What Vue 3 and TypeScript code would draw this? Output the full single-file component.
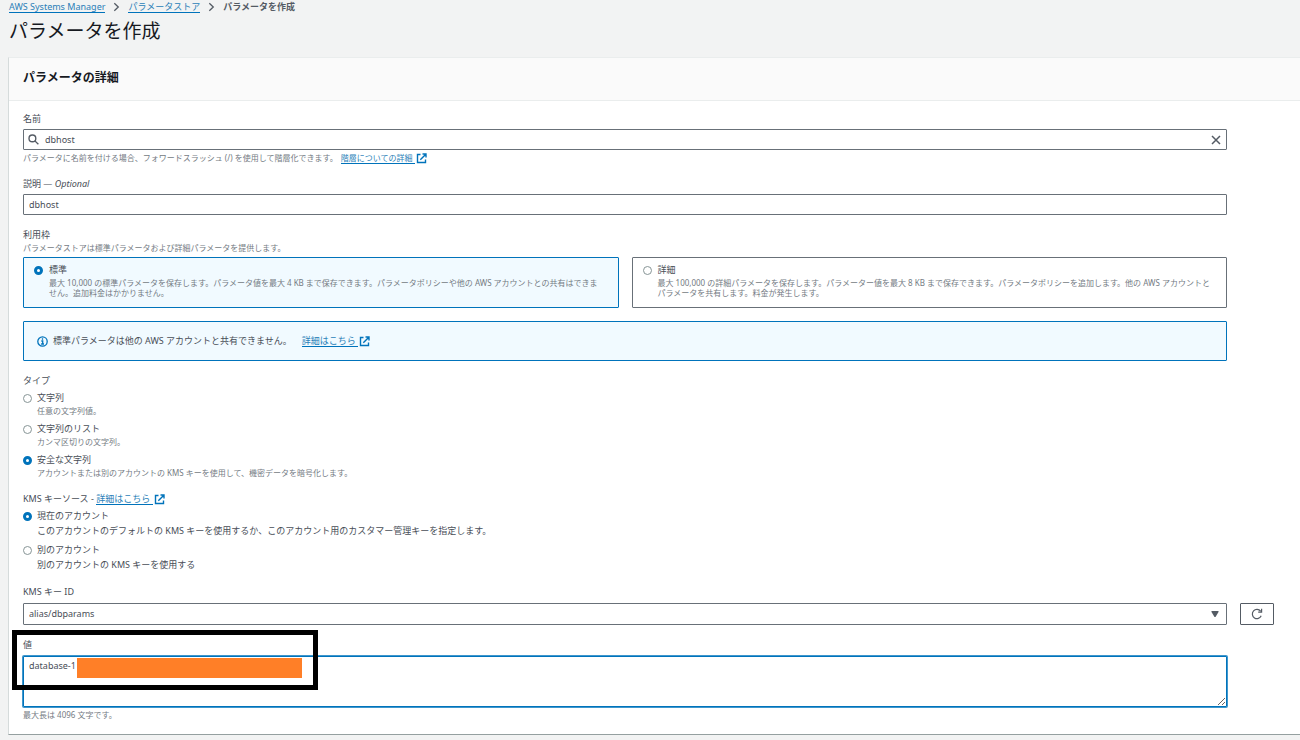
<script setup lang="ts">
import { ref } from 'vue'

interface Choice {
  id: string
  label: string
  text: string
}

const name = ref('dbhost')
const description = ref('dbhost')
const tier = ref('standard')
const type = ref('secure')
const source = ref('current')
const keyId = ref('alias/dbparams')
const value = ref('database-1')

const tiers: Choice[] = [
  {
    id: 'standard',
    label: '標準',
    text: '最大 10,000 の標準パラメータを保存します。パラメータ値を最大 4 KB まで保存できます。パラメータポリシーや他の AWS アカウントとの共有はできません。追加料金はかかりません。',
  },
  {
    id: 'advanced',
    label: '詳細',
    text: '最大 100,000 の詳細パラメータを保存します。パラメーター値を最大 8 KB まで保存できます。パラメータポリシーを追加します。他の AWS アカウントとパラメータを共有します。料金が発生します。',
  },
]

const types: Choice[] = [
  { id: 'string', label: '文字列', text: '任意の文字列値。' },
  { id: 'list', label: '文字列のリスト', text: 'カンマ区切りの文字列。' },
  {
    id: 'secure',
    label: '安全な文字列',
    text: 'アカウントまたは別のアカウントの KMS キーを使用して、機密データを暗号化します。',
  },
]

const sources: Choice[] = [
  {
    id: 'current',
    label: '現在のアカウント',
    text: 'このアカウントのデフォルトの KMS キーを使用するか、このアカウント用のカスタマー管理キーを指定します。',
  },
  { id: 'other', label: '別のアカウント', text: '別のアカウントの KMS キーを使用する' },
]
</script>

<template>
  <main class="page" lang="ja">
    <nav class="crumbs" aria-label="パンくずリスト">
      <a class="link" href="#"><span class="line">AWS Systems Manager</span></a>
      <svg class="chevron" viewBox="0 0 8 10"><path d="M1.5 .8 6 5 1.5 9.2" /></svg>
      <a class="link" href="#"><span class="line">パラメータストア</span></a>
      <svg class="chevron" viewBox="0 0 8 10"><path d="M1.5 .8 6 5 1.5 9.2" /></svg>
      <span class="here">パラメータを作成</span>
    </nav>
    <h1>パラメータを作成</h1>

    <section class="panel">
      <header><h2>パラメータの詳細</h2></header>
      <form class="body" @submit.prevent>
        <div class="field">
          <label for="name">名前</label>
          <div class="search">
            <svg class="glass" viewBox="0 0 12 12"><circle cx="4.8" cy="4.8" r="3.7" /><path d="m7.5 7.5 3.8 3.8" /></svg>
            <input id="name" v-model="name" type="text" spellcheck="false" />
            <button class="clear" type="button" aria-label="クリア" @click="name = ''">
              <svg viewBox="0 0 10 10"><path d="m1 1 8 8M9 1 1 9" /></svg>
            </button>
          </div>
          <p class="hint under">
            パラメータに名前を付ける場合、フォワードスラッシュ (/) を使用して階層化できます。
            <a class="link" href="#"><span class="line">階層についての詳細&nbsp;</span><svg class="ext" viewBox="0 0 11 11"><path d="M4.5 1.5h-3v8h8v-3M6.5 1h3.5v3.5M9.8 1.2 4.3 6.7" /></svg></a>
          </p>
        </div>

        <div class="field">
          <label for="description">説明 — <em>Optional</em></label>
          <input id="description" v-model="description" class="box" type="text" spellcheck="false" />
        </div>

        <fieldset class="field">
          <legend>利用枠</legend>
          <p class="hint tier-hint">パラメータストアは標準パラメータおよび詳細パラメータを提供します。</p>
          <div class="tiles">
            <label v-for="t in tiers" :key="t.id" class="tile" :class="{ chosen: tier === t.id }">
              <input v-model="tier" type="radio" name="tier" :value="t.id" />
              <span class="copy">
                <span class="caption">{{ t.label }}</span>
                <span class="tile-text">{{ t.text }}</span>
              </span>
            </label>
          </div>
        </fieldset>

        <div class="alert field">
          <svg class="info" viewBox="0 0 11 11"><circle cx="5.5" cy="5.5" r="4.7" /><path d="M5.5 2.3v1.4M4.3 5h1.4v3M4.1 8h2.9" /></svg>
          <span>標準パラメータは他の AWS アカウントと共有できません。</span>
          <a class="link" href="#"><span class="line">詳細はこちら&nbsp;</span><svg class="ext" viewBox="0 0 11 11"><path d="M4.5 1.5h-3v8h8v-3M6.5 1h3.5v3.5M9.8 1.2 4.3 6.7" /></svg></a>
        </div>

        <fieldset class="field">
          <legend>タイプ</legend>
          <div class="choices">
            <label v-for="t in types" :key="t.id" class="choice">
              <input v-model="type" type="radio" name="type" :value="t.id" />
              <span class="copy">
                <span class="caption">{{ t.label }}</span>
                <span class="hint">{{ t.text }}</span>
              </span>
            </label>
          </div>
        </fieldset>

        <fieldset class="field">
          <legend>KMS キーソース - <a class="link" href="#"><span class="line">詳細はこちら&nbsp;</span><svg class="ext" viewBox="0 0 11 11"><path d="M4.5 1.5h-3v8h8v-3M6.5 1h3.5v3.5M9.8 1.2 4.3 6.7" /></svg></a></legend>
          <div class="choices">
            <label v-for="s in sources" :key="s.id" class="choice">
              <input v-model="source" type="radio" name="source" :value="s.id" />
              <span class="copy">
                <span class="caption">{{ s.label }}</span>
                <span class="detail">{{ s.text }}</span>
              </span>
            </label>
          </div>
        </fieldset>

        <div class="key">
          <label for="key">KMS キー ID</label>
          <div class="key-row">
            <div class="picker">
              <select id="key" v-model="keyId"><option>alias/dbparams</option></select>
              <svg class="arrow" viewBox="0 0 8 6"><path d="M.5 0h7v1L4.5 6h-1L.5 1z" /></svg>
            </div>
            <button class="refresh" type="button" aria-label="更新">
              <svg viewBox="0 0 12 12"><path d="M10.2 7.8A4.6 4.6 0 1 1 9.6 3.2M10.6 .8v3.4H7.2" /></svg>
            </button>
          </div>
        </div>

        <div class="field value">
          <label for="value">値</label>
          <textarea id="value" v-model="value" spellcheck="false"></textarea>
          <p class="hint under">最大長は 4096 文字です。</p>
          <div class="mask"></div>
          <div class="frame"></div>
        </div>
      </form>
    </section>
  </main>
</template>

<style>
body {
  margin: 0;
  background: #f2f3f3;
}
</style>

<style scoped>
* {
  box-sizing: border-box;
}
.page {
  font: 9px/14px "Noto Sans", "Noto Sans CJK JP", sans-serif;
  color: #484e57;
  padding-bottom: 5px;
  overflow: hidden;
}
input,
select,
textarea,
button {
  font: inherit;
  color: #484e57;
  margin: 0;
  padding: 0;
  border-radius: 1px;
  outline: none;
}
p,
h1,
h2 {
  margin: 0;
}
svg {
  fill: none;
  stroke: #545b64;
}
.crumbs {
  display: flex;
  align-items: center;
  gap: 8px;
  height: 14px;
  padding-left: 9px;
}
.chevron {
  width: 7px;
  height: 10px;
  stroke-width: 1.5;
}
.here {
  color: #545b64;
  font-weight: 700;
}
.link {
  color: #2a7fb8;
  text-decoration: none;
}
.line {
  display: inline-block;
  line-height: 11px;
  border-bottom: 1px solid #0073bb;
}
.ext {
  width: 11px;
  height: 11px;
  margin-left: 1px;
  stroke: #0073bb;
  stroke-width: 1.4;
  vertical-align: -3px;
}
h1 {
  padding-left: 9px;
  margin: 5px 0 14px;
  font-size: 19px;
  line-height: 24px;
  font-weight: 400;
  color: #16191f;
}
.panel {
  margin-left: 8px;
  background: #fff;
  border: 1px solid #d5dbdb;
  border-top-color: #eaeded;
  border-bottom-color: #95a0a0;
  border-right: 0;
}
header {
  padding: 10px 14px 13px;
  background: #fafafa;
  border-bottom: 1px solid #eaeded;
}
h2 {
  font-size: 12px;
  line-height: 19px;
  color: #16191f;
}
.body {
  display: flex;
  flex-direction: column;
  gap: 13px;
  padding: 11px 26px 13px 14px;
}
.field {
  margin: 0 47px 0 0;
  padding: 0;
  border: 0;
  min-width: 0;
}
.field > label,
.key > label,
legend {
  display: block;
  padding: 0;
  margin-bottom: 3px;
}
.hint {
  font-size: 8px;
  line-height: 12px;
  color: #747b83;
}
.under {
  margin-top: 2px;
}
.under .link {
  margin-left: 1px;
}
.search {
  display: flex;
  align-items: center;
  height: 21px;
  padding: 0 5px 0 4px;
  border: 1px solid #687078;
  border-radius: 1px;
}
.glass {
  width: 11px;
  height: 11px;
  stroke-width: 1.5;
}
.search input {
  flex: 1;
  border: 0;
  padding-left: 6px;
  background: none;
}
.clear {
  display: flex;
  border: 0;
  background: none;
}
.clear svg {
  width: 10px;
  height: 10px;
  stroke-width: 1.5;
}
.box {
  display: block;
  width: 100%;
  height: 21px;
  padding: 0 5px;
  border: 1px solid #687078;
}
fieldset legend:has(+ .tier-hint) {
  margin-bottom: 0;
}
.tiles {
  display: grid;
  grid-template-columns: 1fr 1fr;
  gap: 13px;
  margin-top: 3px;
}
.tile {
  display: flex;
  gap: 6px;
  padding: 5px 12px 9px 10px;
  border: 1px solid #687078;
  border-radius: 1px;
}
.tile.chosen {
  border-color: #0073bb;
  background: #f1faff;
}
.tile .copy {
  padding-right: 4px;
}
.copy {
  display: flex;
  flex-direction: column;
}
.tile-text {
  margin-top: 1px;
  font-size: 8px;
  line-height: 10px;
  color: #747b83;
}
input[type="radio"] {
  appearance: none;
  flex: none;
  width: 9px;
  height: 9px;
  margin-top: 3px;
  border: 1px solid #879596;
  border-radius: 50%;
  background: #fff;
}
input[type="radio"]:checked {
  border: 3px solid #0073bb;
}
.alert {
  display: flex;
  align-items: center;
  height: 40px;
  padding: 0 13px;
  border: 1px solid #0073bb;
  border-radius: 1px;
  background: #f1faff;
}
.alert span + .link {
  margin-left: 10px;
}
.info {
  width: 11px;
  height: 11px;
  margin-right: 5px;
  stroke: #0073bb;
  stroke-width: 1.3;
}
.choices {
  display: flex;
  flex-direction: column;
  gap: 5px;
}
.choice {
  display: flex;
  gap: 5px;
}
.detail {
  line-height: 15px;
}
.key > label {
  margin-bottom: 4px;
}
.key-row {
  display: flex;
  gap: 13px;
}
.picker {
  position: relative;
  flex: 1;
}
select {
  display: block;
  appearance: none;
  width: 100%;
  height: 22px;
  padding: 0 5px;
  border: 1px solid #687078;
  background: #fff;
}
.arrow {
  position: absolute;
  right: 8px;
  top: 8px;
  width: 8px;
  height: 6px;
  fill: #545b64;
  stroke: none;
  pointer-events: none;
}
.refresh {
  display: flex;
  align-items: center;
  justify-content: center;
  width: 34px;
  height: 22px;
  border: 1px solid #545b64;
  background: #fff;
}
.refresh svg {
  width: 12px;
  height: 12px;
  stroke-width: 1.2;
}
.value {
  position: relative;
}
.value > label {
  margin-bottom: 4px;
}
textarea {
  display: block;
  width: 100%;
  height: 51px;
  padding: 2px 5px;
  border: 1px solid #0073bb;
  box-shadow: 0 0 0 1px #3f97cd;
}
.mask {
  position: absolute;
  left: 54px;
  top: 20px;
  width: 225px;
  height: 20px;
  background: #ff7f27;
}
.frame {
  position: absolute;
  left: -11px;
  top: -8px;
  width: 306px;
  height: 60px;
  border: 5px solid #000;
  pointer-events: none;
}
</style>
